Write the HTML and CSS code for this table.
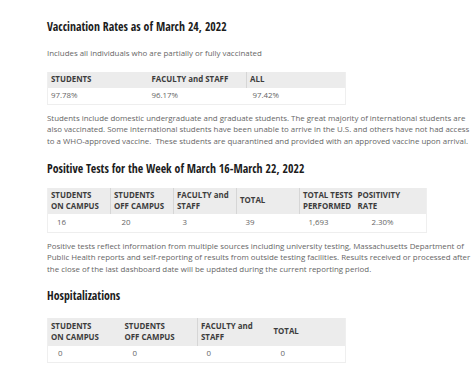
FILE: index.html
```html
<!DOCTYPE html>
<html lang="en">
<head>
<meta charset="utf-8">
<title>COVID Dashboard</title>
<link rel="stylesheet" href="styles.css">
</head>
<body>
<main class="page">
  <h2 class="title">Vaccination Rates as of March 24, 2022</h2>
  <p class="note">Includes all individuals who are partially or fully vaccinated</p>
  <table class="stats t1">
    <thead>
      <tr><th>STUDENTS</th><th>FACULTY and STAFF</th><th class="sep">ALL</th></tr>
    </thead>
    <tbody>
      <tr><td>97.78%</td><td>96.17%</td><td class="p6">97.42%</td></tr>
    </tbody>
  </table>
  <p class="text">Students include domestic undergraduate and graduate students. The great majority of international students are also vaccinated. Some international students have been unable to arrive in the U.S. and others have not had access to a WHO-approved vaccine.&nbsp; These students are quarantined and provided with an approved vaccine upon arrival.</p>

  <h2 class="title t-pos">Positive Tests for the Week of March 16-March 22, 2022</h2>
  <table class="stats t2">
    <thead>
      <tr>
        <th>STUDENTS<br>ON CAMPUS</th>
        <th class="sep">STUDENTS<br>OFF CAMPUS</th>
        <th class="sep">FACULTY and<br>STAFF</th>
        <th class="sep">TOTAL</th>
        <th class="sep">TOTAL TESTS<br>PERFORMED</th>
        <th>POSITIVITY<br>RATE</th>
      </tr>
    </thead>
    <tbody>
      <tr><td class="p9">16</td><td class="p11">20</td><td class="p9">3</td><td class="p9">39</td><td class="p9">1,693</td><td class="p17">2.30%</td></tr>
    </tbody>
  </table>
  <p class="text">Positive tests reflect information from multiple sources including university testing, Massachusetts Department of Public Health reports and self-reporting of results from outside testing facilities. Results received or processed after the close of the last dashboard date will be updated during the current reporting period.</p>

  <h2 class="title t-hosp">Hospitalizations</h2>
  <table class="stats t3">
    <thead>
      <tr>
        <th>STUDENTS<br>ON CAMPUS</th>
        <th>STUDENTS<br>OFF CAMPUS</th>
        <th class="sep">FACULTY and<br>STAFF</th>
        <th>TOTAL</th>
      </tr>
    </thead>
    <tbody>
      <tr><td class="p10">0</td><td class="p11">0</td><td class="p9">0</td><td class="p10">0</td></tr>
    </tbody>
  </table>
</main>
</body>
</html>
```
FILE: styles.css
```css
html, body {
  margin: 0;
  padding: 0;
  background: #ffffff;
}

.page {
  padding: 18px 0 0 47px;
  width: 428px;
  font-family: "Open Sans", "Liberation Sans", sans-serif;
  font-size: 7.9px;
  line-height: 11.6px;
  color: #666666;
}

.title {
  margin: 0;
  font-family: "Open Sans Condensed", "Open Sans", "Liberation Sans Narrow", sans-serif;
  font-stretch: condensed;
  font-weight: 700;
  font-size: 11.8px;
  line-height: 16px;
  color: #1c1c1c;
}

.t-pos {
  margin-top: 12.5px;
}

.t-hosp {
  margin-top: 11.5px;
}

.note {
  margin: 14px 0 0;
}

.text {
  margin: 8px 0 0;
}

.stats {
  border-collapse: collapse;
  table-layout: fixed;
  border-left: 1px solid #efefef;
  border-right: 1px solid #efefef;
}

.t1 { width: 299px; margin-top: 12px; }
.t2 { width: 380px; margin-top: 12px; }
.t3 { width: 299px; margin-top: 15px; }

.t1 th:nth-child(1) { width: 101px; }
.t1 th:nth-child(2) { width: 98px; }

.t2 th:nth-child(1) { width: 63px; }
.t2 th:nth-child(2) { width: 63px; }
.t2 th:nth-child(3) { width: 63px; }
.t2 th:nth-child(4) { width: 63px; }
.t2 th:nth-child(5) { width: 55px; }

.t3 th:nth-child(1) { width: 74px; }
.t3 th:nth-child(2) { width: 76px; }
.t3 th:nth-child(3) { width: 73px; }

.stats th {
  box-sizing: border-box;
  background: #ececec;
  color: #3c3c3c;
  font-size: 7.9px;
  font-weight: 700;
  text-align: left;
  white-space: nowrap;
  padding: 2.5px 3px;
  vertical-align: middle;
}

.t2 th {
  padding-top: 1.5px;
  padding-bottom: 1.5px;
}

.stats th.sep {
  border-left: 1px solid #d6d6d6;
}

.stats td {
  padding: 2px 3px;
  color: #666666;
  white-space: nowrap;
  border-bottom: 1px solid #eeeeee;
}

.t2 td {
  padding-top: 3px;
  padding-bottom: 3px;
}

.stats td.p6 { padding-left: 6px; }
.stats td.p9 { padding-left: 9px; }
.stats td.p10 { padding-left: 10px; }
.stats td.p11 { padding-left: 11px; }
.stats td.p17 { padding-left: 17px; }
```
